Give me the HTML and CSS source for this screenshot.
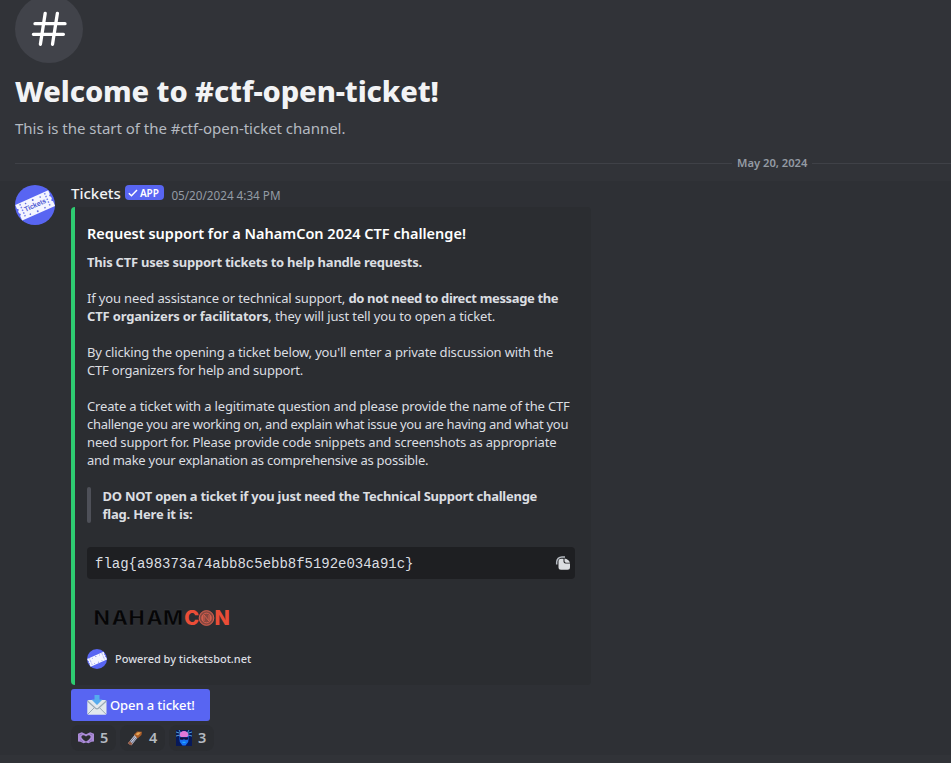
FILE: index.html
```
<!DOCTYPE html>
<html lang="en">
<head>
<meta charset="utf-8">
<title>#ctf-open-ticket</title>
<link rel="stylesheet" href="styles.css">
</head>
<body>
<svg class="defs" width="0" height="0">
  <symbol id="ticket" viewBox="0 0 40 40">
    <circle cx="20" cy="20" r="20" fill="#5865f2"/>
    <g transform="rotate(-24 20 20)">
      <path d="M2 12h36v4l-1.500 1.500L38 19v2l-1.500 1.500L38 24v5H2v-5l1.500-1.500L2 21v-2l1.500-1.500L2 16z" fill="#f4f5ff"/>
      <path d="M6.500 13v15M33.500 13v15" stroke="#7883ef" stroke-width="1.500" stroke-dasharray="1.500 1.500"/>
      <g fill="#6570df"><circle cx="12" cy="14.800" r=".8"/><circle cx="20" cy="14.500" r="1"/><circle cx="28" cy="14.800" r=".8"/><circle cx="12" cy="26.500" r=".8"/><circle cx="20" cy="26.800" r="1"/><circle cx="28" cy="26.500" r=".8"/></g>
    </g>
  </symbol>
</svg>
<header class="welcome">
  <div class="hash"><svg width="68" height="68" viewBox="0 0 68 68"><path d="M30.200 18.300 25.400 49.300M42.400 18.300 37.500 49.300M20 28.700H50M18.400 39.300H48.400" fill="none" stroke="#fff" stroke-width="3.300" stroke-linecap="round"/></svg></div>
  <h1>Welcome to #ctf-open-ticket!</h1>
  <p>This is the start of the #ctf-open-ticket channel.</p>
</header>
<div class="divider"><span>May 20, 2024</span></div>
<article class="message">
  <svg class="avatar" width="40" height="40"><use href="#ticket"/><text x="20" y="22.500" text-anchor="middle" transform="rotate(-24 20 20)" class="ticket-text">Tickets</text></svg>
  <div class="content">
    <div class="byline"><span class="name">Tickets</span><span class="tag"><svg width="10" height="10" viewBox="0 0 10 10"><path d="M.8 5.200 3.500 7.800 9 2" fill="none" stroke="#fff" stroke-width="1.500"/></svg>APP</span><time>05/20/2024 4:34 PM</time></div>
    <section class="embed">
      <h2>Request support for a NahamCon 2024 CTF challenge!</h2>
      <div class="lines">
        <div class="t1"><b>This CTF uses support tickets to help handle requests.</b></div>
        <br>
        <div class="t2">If you need assistance or technical support, <b class="t3">do not need to direct message the</b></div>
        <div class="t4"><b class="t5">CTF organizers or facilitators</b>, they will just tell you to open a ticket.</div>
        <br>
        <div class="t5">By clicking the opening a ticket below, you'll enter a private discussion with the</div>
        <div class="t6">CTF organizers for help and support.</div>
        <br>
        <div class="t2">Create a ticket with a legitimate question and please provide the name of the CTF</div>
        <div class="t7">challenge you are working on, and explain what issue you are having and what you</div>
        <div class="t2">need support for. Please provide code snippets and screenshots as appropriate</div>
        <div class="t8">and make your explanation as comprehensive as possible.</div>
        <br>
        <blockquote><div class="t9">DO NOT open a ticket if you just need the Technical Support challenge</div><div class="t6">flag. Here it is:</div></blockquote>
      </div>
      <div class="code"><code>flag{a98373a74abb8c5ebb8f5192e034a91c}</code>
        <svg width="16" height="16" viewBox="0 0 16 16"><path d="M1.700 9.500V7A5.200 5.200 0 0 1 6.900 1.900H10" fill="none" stroke="#b5bac1" stroke-width="1.500"/><path d="M6 3.700h2.500v2.800a2 2 0 0 0 2 2H15V12.300A2.500 2.500 0 0 1 12.500 14.800H6a2.500 2.500 0 0 1-2.500-2.500V6.200A2.500 2.500 0 0 1 6 3.700z" fill="#dbdee1"/><path d="M9.500 3.500Q13.800 4.200 14.900 7.700H11.200a1.700 1.700 0 0 1-1.700-1.700z" fill="#dbdee1"/></svg>
      </div>
      <svg class="logo" width="144" height="24" viewBox="0 0 144 24">
        <text class="logo-dark" transform="scale(1.080 1)" y="18.200" x="6 22.900 38.500 55 70.500">NAHAM</text>
        <text class="logo-red" y="18.200" x="97.300 127.600">CN</text>
        <circle cx="119.500" cy="11" r="7.700" fill="#87473f"/>
        <g fill="none" stroke="#d9604f" stroke-width=".9"><circle cx="119.500" cy="11" r="7.300"/><circle cx="119.500" cy="11" r="4.800"/><path d="M117 14V8l5 6V8M115.500 9v4M123.500 9v4"/></g>
      </svg>
      <div class="foot"><svg width="20" height="20"><use href="#ticket"/></svg><span>Powered by ticketsbot.net</span></div>
    </section>
    <div class="btn">
      <svg width="20" height="20" viewBox="0 0 20 20"><rect x=".3" y="5" width="19.200" height="14.700" rx="1.500" fill="#e1e8ed"/><path d="M1 19 7.500 12.500M18.800 19 12.300 12.500" stroke="#99aab5" stroke-width="1"/><path d="M.5 6 8.500 13.200Q10 14.400 11.400 13.200L19.300 6" fill="none" stroke="#99aab5" stroke-width="1.200"/><path d="M7.500 0h5v4.500h3L10 10 4.500 4.500h3z" fill="#55acee"/></svg>
      <span>Open a ticket!</span>
    </div>
    <div class="reactions">
      <div class="chip"><svg width="16" height="16" viewBox="0 0 16 16"><path d="M0 3.800 3.800 2.300 8 4.200 12.200 2.300 16 3.800V11.500L13.500 11.800 10.500 13.300 8 12.500 5.500 13.300 2.500 11.800 0 11.500z" fill="#ab8bd7"/><path d="M8 11.600Q3.200 8.800 3.400 6.600 4.800 3.900 8 6.500 11.200 3.900 12.600 6.600 12.800 8.800 8 11.600z" fill="#2b2d31"/><path d="M1.500 5 3.800 4M14.500 5 12.200 4M2 9.500 5 12M14 9.500 11 12" fill="none" stroke="#765aa4" stroke-width=".6"/></svg>5</div>
      <div class="chip"><svg width="16" height="16" viewBox="0 0 16 16"><path d="M.8 13.500 8 4.500 11 7 4.500 15.200z" fill="#c8cbd9"/><path d="M2 13.500 8 6.500M4 14 9.500 7.500" stroke="#4c5475" stroke-width=".8"/><path d="M.8 13.500 2.500 11 5.500 13.500 4.200 15.500z" fill="#945b45"/><path d="M7 4.500 10 1.500 15 1.800 14.500 5 10.500 8.500z" fill="#a75b28"/><path d="M8.500 4.300 11 2.300 14 2.500 11 5.500z" fill="#e5a556"/></svg>4</div>
      <div class="chip"><svg width="16" height="16" viewBox="0 0 16 16"><path d="M0 0h16v16H0z" fill="#07195a"/><path d="M0 2 5 3.500 3 0M16 2 11 3.500 13 0M0 6 4 5M16 6 12 5" stroke="#4e9dd5" fill="none"/><path d="M3.200 6h9.600l-.6 6L9.500 15.500h-3L3.800 12z" fill="#176ff3"/><path d="M3.500 5.500Q4 1 8 1T12.500 5.500L11 7H5z" fill="#e178d8"/><path d="M3.500 7.200h9l-.8 2.500H8.700L8 8.500 7.300 9.700H4.300z" fill="#120c38"/><path d="M6.500 12.300h3" stroke="#25bfff"/></svg>3</div>
    </div>
  </div>
</article>
</body>
</html>
```
FILE: styles.css
```
body {
  margin: 0;
  height: 763px;
  overflow: hidden;
  display: flow-root;
  background: #313338;
  color: #dbdee1;
  font: 13px/18px "Noto Sans", sans-serif;
  white-space: nowrap;
}
svg { display: block; flex: none; }
.defs { position: absolute; }

.welcome { margin: -5px 0 0 15px; }
.hash { width: 68px; height: 68px; border-radius: 50%; background: #41434a; }
h1 { margin: 9px 0 8px; font-size: 29px; line-height: 38px; font-weight: 800; letter-spacing: -.09px; color: #f2f3f5; }
p { margin: 0; font-size: 15px; line-height: 20px; letter-spacing: -.02px; color: #b5bac1; }

.divider {
  display: grid;
  grid-template-columns: 717px auto 1fr;
  gap: 5px;
  align-items: center;
  height: 18px;
  margin: 16px 0 9px 15px;
  font-size: 11.2px;
  font-weight: 600;
  color: #949ba4;
}
.divider::before, .divider::after { content: ""; height: 1px; background: #3f4147; }

.message {
  display: flex;
  gap: 16px;
  box-sizing: border-box;
  height: 574px;
  padding: 4px 0 0 15px;
  background: #2e3035;
}
.byline { display: flex; height: 22px; line-height: 18px; }
.name { margin-top: -1px; font-size: 15px; font-weight: 500; color: #f2f3f5; }
.tag {
  display: flex;
  align-items: center;
  gap: 2px;
  box-sizing: border-box;
  width: 39px;
  height: 15px;
  margin: 0 7.5px 0 4px;
  padding: 0 0 0 3px;
  border-radius: 4px;
  background: #5865f2;
  color: #fff;
  font-size: 10px;
  font-weight: 600;
}
time { padding-top: 1px; font-size: 11.7px; color: #949ba4; }

.embed {
  box-sizing: border-box;
  width: 520px;
  height: 478px;
  padding: 15px 16px 0 12px;
  border-left: 4px solid #2ecc71;
  border-radius: 4px;
  background: #2b2d31;
}
h2 { margin: 0 0 9px; font-size: 14.5px; line-height: 22px; font-weight: 600; color: #fff; }
.t1 { letter-spacing: -.235px; }
.t2 { letter-spacing: -.15px; }
.t3 { letter-spacing: -.36px; }
.t4 { letter-spacing: -.12px; }
.t5 { letter-spacing: -.17px; }
.t6 { letter-spacing: -.2px; }
.t7 { letter-spacing: -.312px; }
.t8 { letter-spacing: -.25px; }
.t9 { letter-spacing: -.26px; }
blockquote {
  position: relative;
  margin: 0;
  padding-left: 15.5px;
  font-weight: 700;
}
blockquote::before {
  content: "";
  position: absolute;
  inset: 0 auto 0 0;
  width: 4px;
  border-radius: 2px;
  background: #4e5058;
}
.code {
  display: flex;
  align-items: center;
  justify-content: space-between;
  box-sizing: border-box;
  height: 32px;
  margin-top: 24px;
  padding: 0 4px 0 8px;
  border-radius: 4px;
  background: #1e1f22;
}
code { padding-top: 2px; font: 14px/18px "Liberation Mono", monospace; letter-spacing: -.02px; }
.logo { margin: 28px 0 0; }
.logo text { font: 700 20px Inter, sans-serif; }
.logo-dark { fill: #060607; stroke: #3c3e43; stroke-width: .3px; }
.logo .logo-red { font-weight: 800; fill: #eb4d37; }
.foot { display: flex; align-items: center; gap: 8px; margin-top: 18px; height: 20px; font-size: 11px; font-weight: 500; letter-spacing: -.03px; }
.ticket-text { font: 700 7px Roboto, sans-serif; fill: #5662d5; }

.btn {
  display: flex;
  align-items: center;
  gap: 3px;
  box-sizing: border-box;
  width: 139px;
  height: 32px;
  margin-top: 4px;
  padding-left: 16px;
  border-radius: 3px;
  background: #5865f2;
  color: #fff;
  font-weight: 500;
  letter-spacing: -.1px;
}
.reactions { display: flex; gap: 4px; margin-top: 4px; }
.chip {
  display: flex;
  align-items: center;
  gap: 6px;
  box-sizing: border-box;
  width: 45px;
  height: 26px;
  padding: 0 0 2px 7px;
  border-radius: 8px;
  background: #2b2d31;
  color: #b5bac1;
  font-size: 14.5px;
  font-weight: 600;
}
.chip svg { margin-top: 1px; }
```
